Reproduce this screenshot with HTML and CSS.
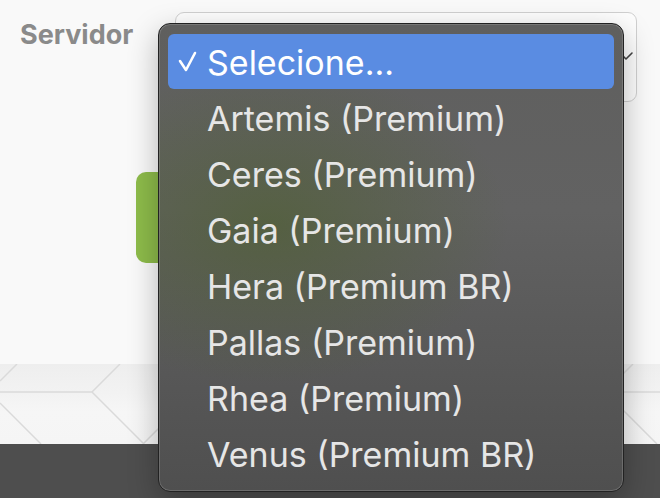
FILE: index.html
```html
<!DOCTYPE html>
<html lang="pt">
<head>
<meta charset="utf-8">
<title>Servidor</title>
<link rel="stylesheet" href="styles.css">
</head>
<body>
<div class="page">
  <main class="content">
    <div class="field">
      <label class="label">Servidor</label>
      <div class="select">
        <svg class="chevron" width="16" height="10" viewBox="0 0 16 10"><path d="M2 2 L8 8 L14 2" fill="none" stroke="#444" stroke-width="1.6" stroke-linecap="round" stroke-linejoin="round"/></svg>
      </div>
    </div>
    <div class="button"></div>
  </main>
  <div class="pattern">
    <svg width="660" height="80" viewBox="0 364 660 80">
      <g fill="none" stroke="#dadada" stroke-width="1.5">
        <path d="M0 381 L17 364"/>
        <path d="M0 392 L92 392"/>
        <path d="M92 392 L120 364"/>
        <path d="M92 392 L144 444"/>
        <path d="M0 403 L41 444"/>
        <path d="M143 444 L195 392"/>
        <path d="M605 392 L660 392"/>
        <path d="M605 392 L633 364"/>
        <path d="M605 392 L657 444"/>
      </g>
    </svg>
  </div>
  <footer class="footer"></footer>

  <div class="menu">
    <ul class="options">
      <li class="option selected">
        <svg class="check" width="20" height="22" viewBox="0 0 20 22"><path d="M2 10 L8 19 L17 2" fill="none" stroke="#fff" stroke-width="2.6" stroke-linecap="round" stroke-linejoin="round"/></svg>
        Selecione...
      </li>
      <li class="option">Artemis (Premium)</li>
      <li class="option">Ceres (Premium)</li>
      <li class="option">Gaia (Premium)</li>
      <li class="option">Hera (Premium BR)</li>
      <li class="option">Pallas (Premium)</li>
      <li class="option">Rhea (Premium)</li>
      <li class="option">Venus (Premium BR)</li>
    </ul>
  </div>
</div>
</body>
</html>
```

FILE: styles.css
```css
* { box-sizing: border-box; }
html, body { margin: 0; padding: 0; }
body {
  width: 660px;
  height: 498px;
  overflow: hidden;
  background: #f8f8f8;
  font-family: Inter, "Liberation Sans", sans-serif;
}
.page {
  position: relative;
  width: 660px;
  height: 498px;
}
.content {
  height: 364px;
  background: #f9f9f9;
}
.field {
  display: flex;
  align-items: flex-start;
  padding: 12px 0 0 20px;
}
.label {
  width: 155px;
  padding-top: 6px;
  font-size: 27px;
  font-weight: 700;
  color: #8a8a8a;
}
.select {
  position: relative;
  width: 462px;
  height: 90px;
  border: 1.5px solid #d0d0d0;
  border-radius: 9px;
  background: #fdfdfd;
}
.chevron {
  position: absolute;
  right: 2px;
  top: 38px;
}
.button {
  margin: 70px 0 0 136px;
  width: 380px;
  height: 91px;
  border-radius: 10px;
  background: #8dbb4a;
}
.pattern {
  height: 80px;
  background: linear-gradient(#eeeeee, #f2f2f2 35%, #f6f6f6 60%, #f5f5f5);
  line-height: 0;
}
.footer {
  height: 54px;
  background: #4e4e4e;
}
.menu {
  position: absolute;
  left: 158px;
  top: 23px;
  width: 466px;
  height: 469px;
  border: 1px solid #222;
  border-radius: 12px;
  box-shadow: inset 0 0 0 1px rgba(255,255,255,0.16), 0 10px 30px rgba(0,0,0,0.28);
  background:
    radial-gradient(ellipse 240px 160px at 110px 200px, rgba(75,95,40,0.55), rgba(75,95,40,0) 100%),
    linear-gradient(#5f5f5e, #626262 40%, #575757 75%, #4f4f4f);
  padding: 10px 9px;
}
.options {
  list-style: none;
  margin: 0;
  padding: 0;
}
.option {
  position: relative;
  height: 56px;
  line-height: 58px;
  padding-left: 39px;
  font-size: 34px;
  color: #e6e6e6;
  border-radius: 6px;
  white-space: nowrap;
}
.option.selected {
  background: #5a8ce2;
  color: #ffffff;
  height: 55px;
  margin-bottom: 1px;
}
.check {
  position: absolute;
  left: 10px;
  top: 17px;
}
```
